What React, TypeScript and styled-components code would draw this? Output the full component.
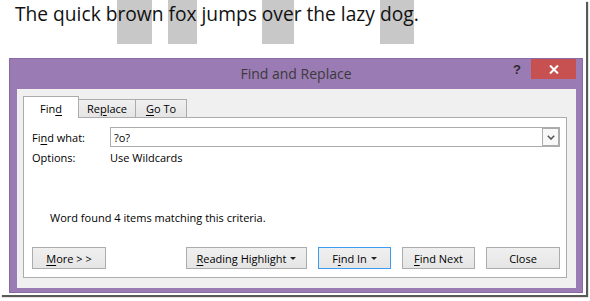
import React from "react";
import styled, { createGlobalStyle } from "styled-components";

const GlobalStyle = createGlobalStyle`
  html, body { margin: 0; padding: 0; background: #fff; }
  body { width: 590px; height: 301px; overflow: hidden; }
  * { box-sizing: border-box; }
`;

const UI_FONT = `"Open Sans", "Liberation Sans", sans-serif`;

const Frame = styled.div`
  width: 586px;
  height: 295px;
  background: #fff;
  box-shadow: 2px 2px 1px rgba(0, 0, 0, 0.65);
  display: flex;
  flex-direction: column;
`;

const Sentence = styled.div`
  height: 58px;
  padding-left: 15px;
  font-family: ${UI_FONT};
  font-size: 19.2px;
  line-height: 27px;
  color: #111;
  white-space: nowrap;
`;

const Hit = styled.span`
  background: #c8c8c8;
  padding: 1px 0 17px;
`;

const Dialog = styled.div`
  margin-left: 9px;
  width: 574px;
  height: 235px;
  background: #9b7bb4;
  border: 1px solid #8a6aa5;
  display: flex;
  flex-direction: column;
  font-family: ${UI_FONT};
  font-size: 11px;
  color: #000;
`;

const TitleBar = styled.div`
  height: 30px;
  display: grid;
  grid-template-columns: 1fr auto 1fr;
`;

const Title = styled.div`
  grid-column: 2;
  align-self: center;
  font-size: 14px;
  color: #3a3a3a;
  margin-top: -2px;
`;

const Controls = styled.div`
  grid-column: 3;
  justify-self: end;
  display: flex;
  align-items: center;
  height: 20px;
  margin-right: 6px;
  gap: 10px;
`;

const Help = styled.span`
  font-family: "Liberation Sans", sans-serif;
  font-weight: bold;
  font-size: 13px;
  color: #2b2b2b;
`;

const CloseBox = styled.div`
  width: 45px;
  height: 20px;
  background: #c75050;
  display: flex;
  align-items: center;
  justify-content: center;
`;

const Client = styled.div`
  flex: 1;
  margin: 0 6px 4px 7px;
  background: #f0f0f0;
  padding: 7px 9px 10px 6px;
  display: flex;
  flex-direction: column;
`;

const TabRow = styled.div`
  height: 21px;
  display: flex;
  align-items: flex-end;
`;

const Tab = styled.div<{ $active?: boolean; $w: number }>`
  width: ${(p) => p.$w}px;
  height: ${(p) => (p.$active ? 22 : 18)}px;
  margin-bottom: ${(p) => (p.$active ? -1 : 0)}px;
  margin-left: ${(p) => (p.$active ? 0 : -1)}px;
  padding-top: ${(p) => (p.$active ? 2 : 0)}px;
  position: relative;
  z-index: ${(p) => (p.$active ? 2 : 1)};
  border: 1px solid #acacac;
  border-bottom: none;
  background: ${(p) => (p.$active ? "#fff" : "linear-gradient(#f0f0f0, #e5e5e5)")};
  display: flex;
  align-items: center;
  justify-content: center;
`;

const Panel = styled.div`
  flex: 1;
  background: #fff;
  border: 1px solid #acacac;
  padding: 9px 6px 8px 8px;
  display: flex;
  flex-direction: column;
`;

const FieldRow = styled.div`
  height: 20px;
  display: grid;
  grid-template-columns: 78px 1fr;
  align-items: center;
`;

const Key = styled.span`
  text-decoration: underline;
  text-underline-offset: 2px;
`;

const Combo = styled.div`
  height: 20px;
  border: 1px solid #acacac;
  display: flex;
  align-items: center;
  padding-left: 3px;
`;

const ComboText = styled.span`
  flex: 1;
`;

const DropButton = styled.div`
  width: 17px;
  height: 18px;
  border: 1px solid #acacac;
  background: #f8f8f8;
  display: flex;
  align-items: center;
  justify-content: center;
`;

const Message = styled.div`
  margin-top: 40px;
  height: 20px;
  padding-left: 18px;
  display: flex;
  align-items: center;
`;

const ButtonRow = styled.div`
  margin-top: 20px;
  height: 22px;
  display: flex;
`;

const ButtonGroup = styled.div`
  margin-left: auto;
  display: flex;
  gap: 11px;
`;

const Button = styled.div<{ $w: number; $focus?: boolean }>`
  width: ${(p) => p.$w}px;
  height: 22px;
  border: 1px solid ${(p) => (p.$focus ? "#3d9bf0" : "#acacac")};
  background: linear-gradient(#f0f0f0, #e5e5e5);
  display: flex;
  align-items: center;
  justify-content: center;
  gap: 4px;
`;

const Caret = () => (
  <svg width="6" height="3" viewBox="0 0 6 3">
    <path d="M0 0H6L3 3Z" fill="#222" />
  </svg>
);

export default function App() {
  return (
    <>
      <GlobalStyle />
      <Frame>
        <Sentence>
          The quick b<Hit>row</Hit>n <Hit>fox</Hit> jumps <Hit>ove</Hit>r the lazy <Hit>dog</Hit>.
        </Sentence>
        <Dialog>
          <TitleBar>
            <Title>Find and Replace</Title>
            <Controls>
              <Help>?</Help>
              <CloseBox>
                <svg width="10" height="9" viewBox="0 0 10 9">
                  <path d="M1 0.5L9 8.5M9 0.5L1 8.5" stroke="#fff" strokeWidth="2" />
                </svg>
              </CloseBox>
            </Controls>
          </TitleBar>
          <Client>
            <TabRow>
              <Tab $active $w={56}>
                Fin<Key>d</Key>
              </Tab>
              <Tab $w={58}>
                Re<Key>p</Key>lace
              </Tab>
              <Tab $w={52}>
                <Key>G</Key>o To
              </Tab>
            </TabRow>
            <Panel>
              <FieldRow>
                <span>
                  Fi<Key>n</Key>d what:
                </span>
                <Combo>
                  <ComboText>?o?</ComboText>
                  <DropButton>
                    <svg width="8" height="5" viewBox="0 0 8 5">
                      <path d="M0.8 0.8L4 4L7.2 0.8" stroke="#555" strokeWidth="1.6" fill="none" />
                    </svg>
                  </DropButton>
                </Combo>
              </FieldRow>
              <FieldRow>
                <span>Options:</span>
                <span>Use Wildcards</span>
              </FieldRow>
              <Message>Word found 4 items matching this criteria.</Message>
              <ButtonRow>
                <Button $w={74}>
                  <span>
                    <Key>M</Key>ore &gt; &gt;
                  </span>
                </Button>
                <ButtonGroup>
                  <Button $w={121}>
                    <span>
                      <Key>R</Key>eading Highlight
                    </span>
                    <Caret />
                  </Button>
                  <Button $w={73} $focus>
                    <span>
                      F<Key>i</Key>nd In
                    </span>
                    <Caret />
                  </Button>
                  <Button $w={73}>
                    <span>
                      <Key>F</Key>ind Next
                    </span>
                  </Button>
                  <Button $w={74}>
                    <span>Close</span>
                  </Button>
                </ButtonGroup>
              </ButtonRow>
            </Panel>
          </Client>
        </Dialog>
      </Frame>
    </>
  );
}
